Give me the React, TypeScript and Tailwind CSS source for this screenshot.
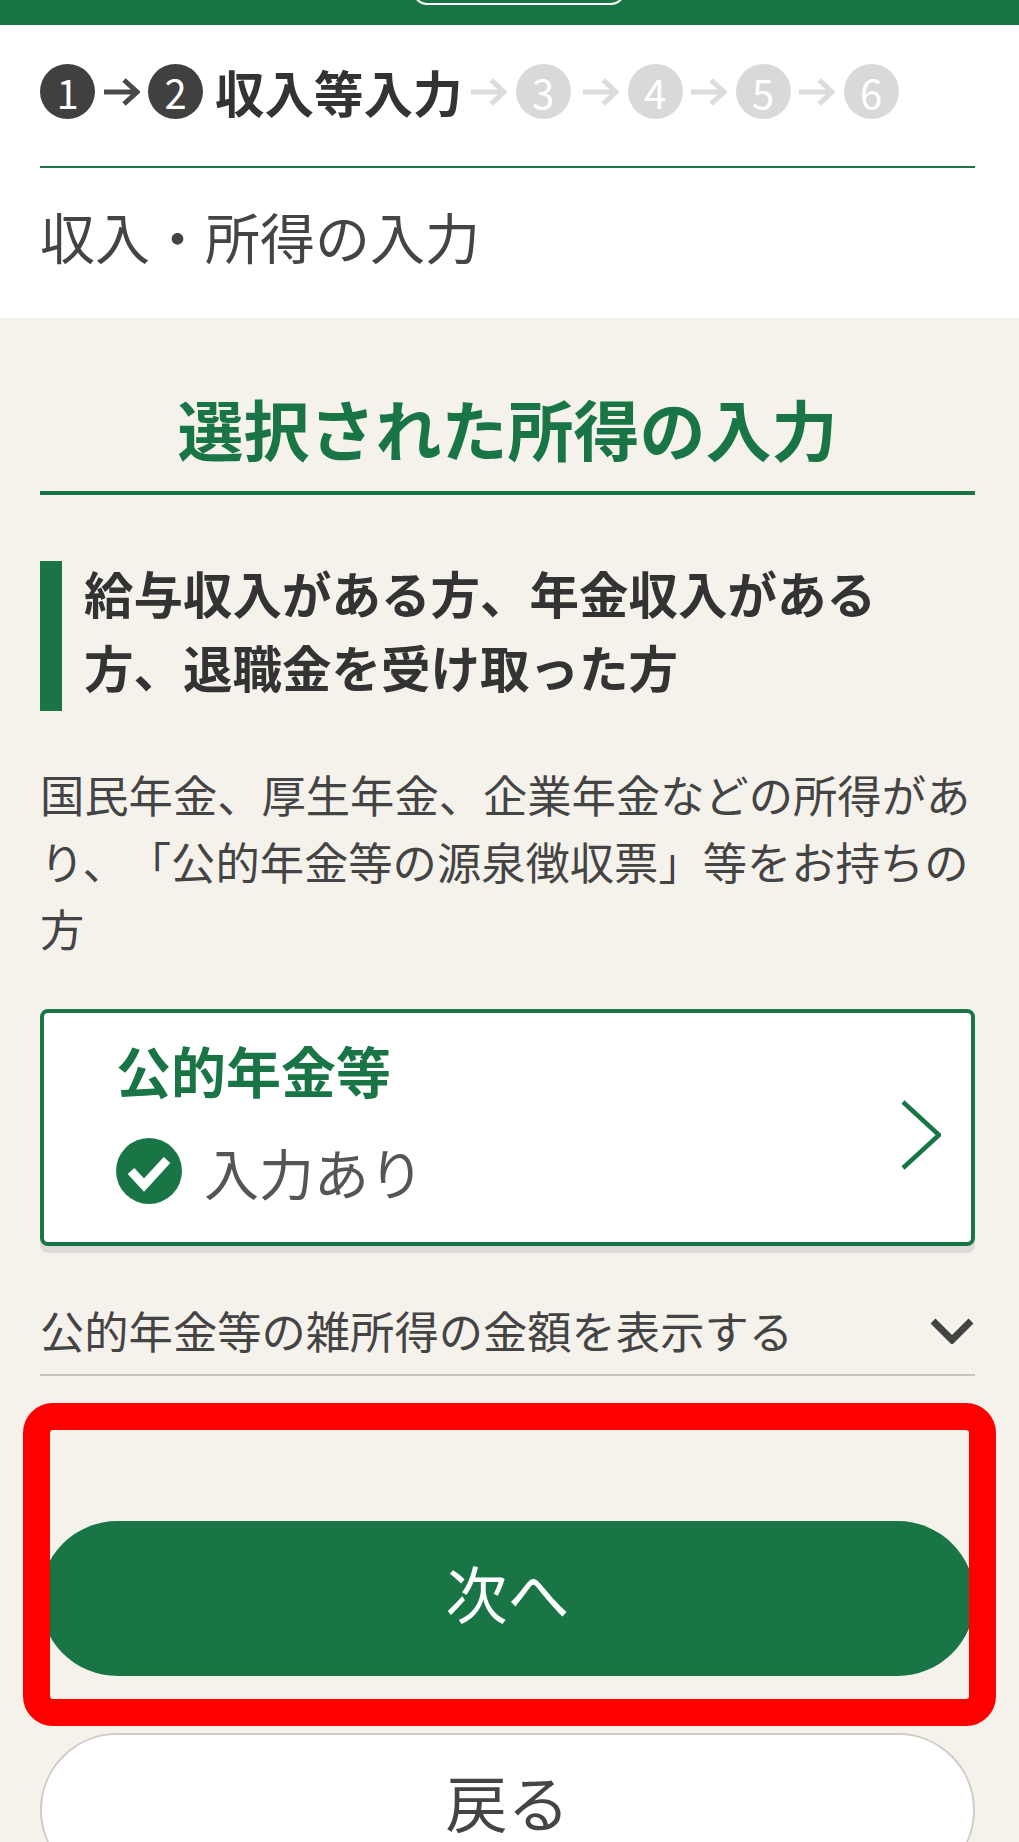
const font = "font-['Noto_Sans_CJK_JP','Liberation_Sans',sans-serif]";

function StepCircle({ n, active }: { n: number; active?: boolean }) {
  return (
    <span
      className={`flex h-[55px] w-[55px] shrink-0 items-center justify-center rounded-full text-[40px] leading-none text-white ${
        active ? "bg-[#404040]" : "bg-[#d9d9d9]"
      }`}
    >
      {n}
    </span>
  );
}

function StepArrow({ active }: { active?: boolean }) {
  return (
    <svg
      className={`mx-[8.5px] h-[28px] w-[36px] shrink-0 ${active ? "text-[#4a4a4a]" : "text-[#dcdcdc]"}`}
      viewBox="0 0 36 28"
      fill="none"
      stroke="currentColor"
      strokeWidth="5"
    >
      <path d="M0 14h32" />
      <path d="M20 2l13 12-13 12" />
    </svg>
  );
}

export default function App() {
  return (
    <div className={`relative h-[1842px] w-[1019px] overflow-hidden bg-[#f5f2ec] text-[#333333] ${font}`}>
      <header className="relative h-[25px] bg-[#197545]">
        <div className="absolute -top-[30px] left-[413px] h-[35px] w-[212px] rounded-[14px] border-2 border-white" />
      </header>

      <div className="bg-white pr-[44px] pl-[40px]">
        <div className="flex h-[143px] items-center border-b-2 border-[#197545] pb-[8px]">
          <StepCircle n={1} active />
          <StepArrow active />
          <StepCircle n={2} active />
          <span className="ml-[12px] text-[49.5px] leading-none font-bold whitespace-nowrap text-[#333333]">
            収入等入力
          </span>
          <StepArrow />
          <StepCircle n={3} />
          <div className="w-[4px] shrink-0" />
          <StepArrow />
          <StepCircle n={4} />
          <StepArrow />
          <StepCircle n={5} />
          <StepArrow />
          <StepCircle n={6} />
        </div>
        <h1 className="flex h-[150px] items-center pb-[16px] text-[55px] leading-none font-normal text-[#444444]">
          収入・所得の入力
        </h1>
      </div>

      <main className="pr-[44px] pl-[40px]">
        <h2 className="flex h-[177px] items-end justify-center border-b-4 border-[#197545] pb-[31px] text-[66px] leading-none font-bold text-[#197545]">
          選択された所得の入力
        </h2>

        <h3 className="mt-[66px] flex h-[150px] items-start border-l-[22px] border-[#197545] pr-[90px] pl-[22px] text-[49.5px] leading-[74px] font-bold text-[#333333]">
          <span className="-mt-[5px] block">給与収入がある方、年金収入がある方、退職金を受け取った方</span>
        </h3>

        <p className="mt-[50px] text-[44.3px] leading-[67px] text-[#444444] [text-spacing-trim:space-all]">
          国民年金、厚生年金、企業年金などの所得があり、「公的年金等の源泉徴収票」等をお持ちの方
        </p>

        <div className="mt-[47px] flex h-[237px] items-center justify-between rounded-[8px] border-[4px] border-[#197545] bg-white pr-[30px] pl-[72px] shadow-[0_7px_0_#dcdbd7]">
          <div className="mb-[14px]">
            <div className="text-[55px] leading-[64px] font-bold text-[#197545]">公的年金等</div>
            <div className="mt-[37px] flex items-center">
              <svg className="h-[66px] w-[66px]" viewBox="0 0 66 66">
                <circle cx="33" cy="33" r="33" fill="#197545" />
                <path d="M15 33l13 14 23-25" fill="none" stroke="#ffffff" strokeWidth="9" />
              </svg>
              <span className="ml-[22px] text-[55px] leading-none text-[#555555]">入力あり</span>
            </div>
          </div>
          <svg className="mt-[14px] h-[70px] w-[40px]" viewBox="0 0 40 70" fill="none" stroke="#197545" strokeWidth="4.5">
            <path d="M2 2l36 33L2 68" />
          </svg>
        </div>

        <div className="mt-[55px] flex h-[75px] items-center justify-between border-b-2 border-[#c8c5be] pb-[14px]">
          <span className="text-[44.3px] leading-none text-[#444444]">公的年金等の雑所得の金額を表示する</span>
          <svg className="mr-[2px] h-[26px] w-[42px]" viewBox="0 0 42 26" fill="none" stroke="#444444" strokeWidth="7">
            <path d="M2 3l19 19L40 3" />
          </svg>
        </div>

        <button
          type="button"
          className="mt-[145px] flex h-[155px] w-full items-center justify-center rounded-[78px] bg-[#197545] pb-[14px] text-[62px] leading-none text-white"
        >
          次へ
        </button>

        <button
          type="button"
          className="mt-[57px] flex h-[154px] w-full items-center justify-center rounded-[77px] border-2 border-[#cfccc5] bg-white pb-[18px] text-[62px] leading-none text-[#444444]"
        >
          戻る
        </button>
      </main>

      {/* red annotation frame */}
      <div className="absolute top-[1403px] left-[23px] h-[323px] w-[973px] rounded-[30px] border-[27px] border-[#ff0000]" />
    </div>
  );
}
